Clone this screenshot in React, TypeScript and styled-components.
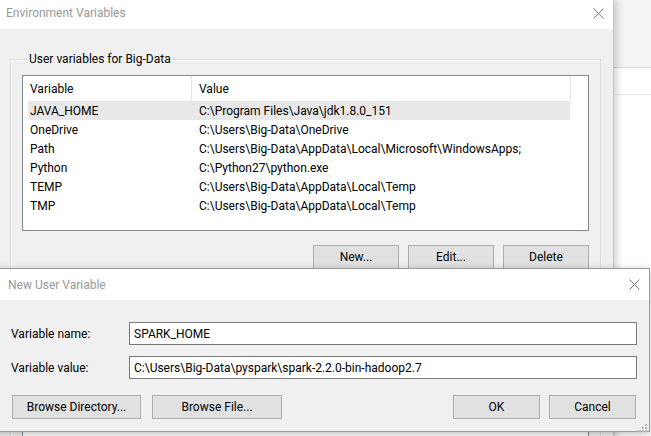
import React from "react";
import styled, { createGlobalStyle } from "styled-components";

const FONT = `Roboto, "Noto Sans", sans-serif`;

const GlobalStyle = createGlobalStyle`
  html, body { margin: 0; padding: 0; }
  body { font-family: ${FONT}; font-size: 12px; background: #ffffff; color: #000; }
  * { box-sizing: border-box; }
`;

const Desktop = styled.div`
  position: relative;
  width: 651px;
  height: 436px;
  overflow: hidden;
  background: #ffffff;
`;

const BackWindow = styled.div`
  position: absolute;
  left: 613px;
  top: 0;
  right: 0;
  bottom: 0;
  display: flex;
  flex-direction: column;
  background: #ffffff;
`;

const BackPane = styled.div<{ $h: number; $bg: string; $line: string }>`
  flex: none;
  height: ${(p) => p.$h}px;
  background: ${(p) => p.$bg};
  border-bottom: 1px solid ${(p) => p.$line};
`;

const Window = styled.div`
  position: absolute;
  left: 0;
  top: 0;
  width: 614px;
  height: 480px;
  display: flex;
  flex-direction: column;
  background: #f0f0f0;
  border-right: 1px solid #c4c4c4;
  box-shadow: 3px 0 7px rgba(0, 0, 0, 0.18);
`;

const TitleBar = styled.div<{ $h: number; $pl: number; $pb: number }>`
  flex: none;
  height: ${(p) => p.$h}px;
  display: flex;
  align-items: center;
  justify-content: space-between;
  padding-left: ${(p) => p.$pl}px;
  padding-bottom: ${(p) => p.$pb}px;
  background: #ffffff;
  color: #999999;
  font-size: 12px;
`;

const CloseBox = styled.div`
  width: 30px;
  height: 100%;
  display: flex;
  align-items: center;
  justify-content: center;
`;

const CloseIcon = () => (
  <svg width="11" height="11" viewBox="0 0 11 11">
    <path d="M0.5 0.5 L10.5 10.5 M10.5 0.5 L0.5 10.5" stroke="#7a7a7a" strokeWidth="1" fill="none" />
  </svg>
);

const EnvBody = styled.div`
  display: flex;
  flex-direction: column;
  gap: 10px;
  padding: 22px 12px 0 10px;
`;

const Group = styled.fieldset<{ $pb: number }>`
  margin: 0;
  padding: 8px 11px ${(p) => p.$pb}px 11px;
  border: 1px solid #dcdcdc;
  box-shadow: inset 1px 1px 0 #ffffff;
  min-width: 0;
`;

const Legend = styled.legend`
  margin-left: 5px;
  padding: 0 2px;
  line-height: 16px;
  font-size: 12px;
`;

const ListView = styled.div<{ $h: number }>`
  height: ${(p) => p.$h}px;
  background: #ffffff;
  border: 1px solid #828790;
  display: flex;
  flex-direction: column;
`;

const HeaderRow = styled.div`
  flex: none;
  height: 25px;
  display: grid;
  grid-template-columns: 169px 379px;
  background: #ffffff;
`;

const HeaderCell = styled.div<{ $pl: number }>`
  display: flex;
  align-items: center;
  padding-left: ${(p) => p.$pl}px;
  border-right: 1px solid #e5e5e5;
`;

const Row = styled.div<{ $selected?: boolean }>`
  flex: none;
  height: 19px;
  margin-left: 5px;
  width: 542px;
  display: grid;
  grid-template-columns: 163px 379px;
  align-items: center;
  background: ${(p) => (p.$selected ? "#e8e8e8" : "transparent")};
  white-space: nowrap;
`;

const Cell = styled.div<{ $pl: number }>`
  padding-left: ${(p) => p.$pl}px;
  overflow: hidden;
`;

const ButtonRow = styled.div<{ $mt: number }>`
  display: flex;
  justify-content: flex-end;
  gap: 9px;
  margin-top: ${(p) => p.$mt}px;
`;

const Button = styled.button<{ $w: number }>`
  width: ${(p) => p.$w}px;
  height: 24px;
  padding: 0;
  background: #e1e1e1;
  border: 1px solid #adadad;
  font-family: ${FONT};
  font-size: 12px;
  color: #000;
`;

const Dialog = styled.div`
  position: absolute;
  left: -10px;
  top: 268px;
  width: 660px;
  height: 164px;
  display: flex;
  flex-direction: column;
  background: #f0f0f0;
  border: 1px solid #9c9c9c;
  box-shadow: 0 2px 8px rgba(0, 0, 0, 0.25);
`;

const DialogBody = styled.div`
  position: relative;
  flex: 1;
  display: flex;
  flex-direction: column;
  padding: 22px 12px 0 20px;
`;

const Form = styled.div`
  display: grid;
  grid-template-columns: 118px 1fr;
  row-gap: 11px;
  align-items: center;
`;

const Label = styled.div`
  font-size: 12px;
`;

const Input = styled.div`
  height: 23px;
  display: flex;
  align-items: center;
  padding-left: 4px;
  background: #ffffff;
  border: 1px solid #7a7a7a;
  white-space: nowrap;
`;

const DialogButtons = styled.div`
  display: flex;
  justify-content: space-between;
  margin-top: 16px;
  padding: 0 1px;
`;

const ButtonGroup = styled.div<{ $gap: number }>`
  display: flex;
  gap: ${(p) => p.$gap}px;
`;

const Grip = styled.div`
  position: absolute;
  right: 2px;
  bottom: 2px;
  width: 8px;
  height: 8px;
`;

const GripIcon = () => (
  <svg width="8" height="8" viewBox="0 0 8 8">
    {[
      [6, 0],
      [3, 3],
      [6, 3],
      [0, 6],
      [3, 6],
      [6, 6],
    ].map(([x, y]) => (
      <rect key={`${x}-${y}`} x={x} y={y} width="2" height="2" fill="#b8b8b8" />
    ))}
  </svg>
);

const userVars = [
  ["JAVA_HOME", "C:\\Program Files\\Java\\jdk1.8.0_151"],
  ["OneDrive", "C:\\Users\\Big-Data\\OneDrive"],
  ["Path", "C:\\Users\\Big-Data\\AppData\\Local\\Microsoft\\WindowsApps;"],
  ["Python", "C:\\Python27\\python.exe"],
  ["TEMP", "C:\\Users\\Big-Data\\AppData\\Local\\Temp"],
  ["TMP", "C:\\Users\\Big-Data\\AppData\\Local\\Temp"],
];

export default function App() {
  return (
    <>
      <GlobalStyle />
      <Desktop>
        <BackWindow>
          <BackPane $h={68} $bg="#f4f4f4" $line="#d6d6d6" />
          <BackPane $h={27} $bg="#ffffff" $line="#e8e8e8" />
        </BackWindow>

        <Window>
          <TitleBar $h={29} $pl={6} $pb={3}>
            <span>Environment Variables</span>
            <CloseBox>
              <CloseIcon />
            </CloseBox>
          </TitleBar>
          <EnvBody>
            <Group $pb={12}>
              <Legend>User variables for Big-Data</Legend>
              <ListView $h={156}>
                <HeaderRow>
                  <HeaderCell $pl={7}>Variable</HeaderCell>
                  <HeaderCell $pl={7}>Value</HeaderCell>
                </HeaderRow>
                {userVars.map(([name, value], i) => (
                  <Row key={name} $selected={i === 0}>
                    <Cell $pl={2}>{name}</Cell>
                    <Cell $pl={8}>{value}</Cell>
                  </Row>
                ))}
              </ListView>
              <ButtonRow $mt={14}>
                <Button $w={86}>New...</Button>
                <Button $w={86}>Edit...</Button>
                <Button $w={86}>Delete</Button>
              </ButtonRow>
            </Group>
            <Group $pb={12}>
              <ListView $h={156} />
            </Group>
          </EnvBody>
        </Window>

        <Dialog>
          <TitleBar $h={31} $pl={17} $pb={0}>
            <span>New User Variable</span>
            <CloseBox>
              <CloseIcon />
            </CloseBox>
          </TitleBar>
          <DialogBody>
            <Form>
              <Label>Variable name:</Label>
              <Input>SPARK_HOME</Input>
              <Label>Variable value:</Label>
              <Input>C:\Users\Big-Data\pyspark\spark-2.2.0-bin-hadoop2.7</Input>
            </Form>
            <DialogButtons>
              <ButtonGroup $gap={11}>
                <Button $w={129}>Browse Directory...</Button>
                <Button $w={130}>Browse File...</Button>
              </ButtonGroup>
              <ButtonGroup $gap={9}>
                <Button $w={87}>OK</Button>
                <Button $w={87}>Cancel</Button>
              </ButtonGroup>
            </DialogButtons>
            <Grip>
              <GripIcon />
            </Grip>
          </DialogBody>
        </Dialog>
      </Desktop>
    </>
  );
}
